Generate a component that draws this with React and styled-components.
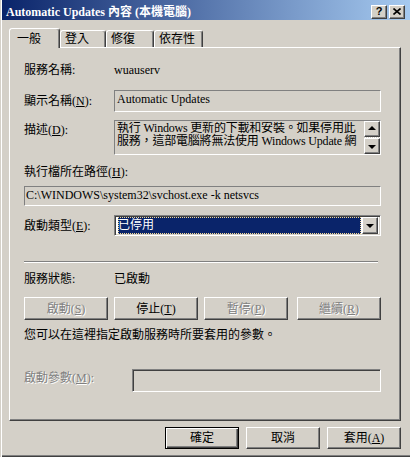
import React from "react";
import styled, { createGlobalStyle } from "styled-components";

const GlobalStyle = createGlobalStyle`
  html, body {
    margin: 0;
    padding: 0;
    background: #d4d0c8;
  }
  body {
    font-family: "Liberation Serif", "Noto Sans CJK TC", serif;
    font-size: 12px;
    color: #000;
  }
`;

const Window = styled.div`
  width: 410px;
  height: 457px;
  box-sizing: border-box;
  background: #d4d0c8;
  padding: 0 0 2px 2px;
  box-shadow: inset 1px 0 #d4d0c8, inset 2px 0 #fff, inset 0 -1px #404040,
    inset 0 -2px #808080;
  display: flex;
  flex-direction: column;
`;

const TitleBar = styled.div`
  height: 20px;
  box-sizing: border-box;
  padding: 3px 5px 0 4px;
  background: linear-gradient(to right, #0a246a, #a6caf0);
  display: flex;
  align-items: center;
`;

const Title = styled.div`
  flex: 1;
  color: #fff;
  font-weight: bold;
  font-size: 12px;
  line-height: 14px;
  white-space: nowrap;
`;

const Raised = styled.div`
  box-sizing: border-box;
  background: #d4d0c8;
  border: 1px solid;
  border-color: #fff #404040 #404040 #fff;
  box-shadow: inset -1px -1px #808080;
`;

const CaptionButton = styled(Raised)`
  width: 16px;
  height: 14px;
  margin-left: ${(p) => p.$gap || 0}px;
  display: flex;
  align-items: center;
  justify-content: center;
  font-family: "Liberation Sans", sans-serif;
  font-weight: bold;
  font-size: 11px;
  line-height: 12px;
  padding-bottom: 1px;
`;

const Body = styled.div`
  padding: 8px 9px 0 7px;
  display: flex;
  flex-direction: column;
`;

const TabStrip = styled.div`
  display: flex;
  align-items: flex-end;
  height: 20px;
  margin-bottom: -1px;
  position: relative;
  z-index: 1;
`;

const Tab = styled.div`
  box-sizing: border-box;
  width: ${(p) => p.$w}px;
  height: ${(p) => (p.$active ? 20 : 17)}px;
  margin-bottom: ${(p) => (p.$active ? 0 : 1)}px;
  padding-left: ${(p) => (p.$active ? 7 : 4)}px;
  background: #d4d0c8;
  border: 1px solid;
  border-bottom: none;
  border-color: #fff #404040 transparent #fff;
  box-shadow: inset -1px 0 #808080;
  border-radius: 3px 3px 0 0;
  display: flex;
  align-items: center;
  font-size: 12px;
  line-height: 14px;
  white-space: nowrap;
`;

const Panel = styled.div`
  box-sizing: border-box;
  height: 374px;
  border: 1px solid;
  border-color: #fff #404040 #404040 #fff;
  box-shadow: inset -1px -1px #808080;
  padding: 15px 19px 0 14px;
  display: flex;
  flex-direction: column;
`;

const Row = styled.div`
  display: flex;
  align-items: ${(p) => p.$align || "center"};
  margin-top: ${(p) => p.$mt || 0}px;
`;

const Label = styled.div`
  width: ${(p) => p.$w || 90}px;
  flex-shrink: 0;
  line-height: 14px;
  white-space: nowrap;
  padding-top: ${(p) => p.$pt || 0}px;
  color: ${(p) => (p.$disabled ? "#808080" : "#000")};
  text-shadow: ${(p) => (p.$disabled ? "1px 1px #fff" : "none")};
`;

const Text = styled.div`
  line-height: 14px;
  white-space: nowrap;
  margin-top: ${(p) => p.$mt || 0}px;
`;

const Field = styled.div`
  box-sizing: border-box;
  width: ${(p) => p.$w || 267}px;
  height: ${(p) => p.$h}px;
  margin-top: ${(p) => p.$mt || 0}px;
  border: 1px solid;
  border-color: #808080 #fff #fff #808080;
  box-shadow: ${(p) =>
    p.$deep ? "inset 1px 1px #404040, inset -1px -1px #d4d0c8" : "none"};
  padding: ${(p) => p.$pad || "1px 2px 0"};
  line-height: 14px;
  white-space: nowrap;
  overflow: hidden;
  display: flex;
`;

const DescText = styled.div`
  flex: 1;
  min-width: 0;
  overflow: hidden;
  line-height: 13px;
  letter-spacing: -0.2px;
  padding-right: 4px;
`;

const ScrollBar = styled.div`
  width: 16px;
  flex-shrink: 0;
  display: flex;
  flex-direction: column;
  margin: -1px -2px 0 0;
`;

const ScrollButton = styled(Raised)`
  width: 16px;
  height: 16px;
  display: flex;
  align-items: center;
  justify-content: center;
`;

const Track = styled.div`
  height: 2px;
  background: repeating-conic-gradient(#fff 0 25%, #d4d0c8 0 50%) 0 0 / 2px 2px;
`;

const Arrow = styled.span`
  width: 0;
  height: 0;
  border-left: 4px solid transparent;
  border-right: 4px solid transparent;
  ${(p) =>
    p.$up
      ? "border-bottom: 4px solid #000; margin-bottom: 1px;"
      : "border-top: 4px solid #000; margin-top: 1px;"}
`;

const Combo = styled.div`
  box-sizing: border-box;
  width: 267px;
  height: 21px;
  border: 1px solid;
  border-color: #808080 #fff #fff #808080;
  box-shadow: inset 1px 1px #404040, inset -1px -1px #d4d0c8;
  background: #fff;
  padding: 1px 2px 1px 2px;
  display: flex;
  align-items: stretch;
`;

const Selected = styled.div`
  flex: 1;
  margin: 0 1px 0 1px;
  background: #0a246a;
  color: #fff;
  outline: 1px dotted #f5db95;
  outline-offset: -1px;
  line-height: 16px;
  font-size: 12px;
`;

const DropButton = styled(Raised)`
  width: 16px;
  display: flex;
  align-items: center;
  justify-content: center;
`;

const Separator = styled.div`
  width: 354px;
  height: 0;
  margin-top: ${(p) => p.$mt}px;
  border-top: 1px solid #808080;
  border-bottom: 1px solid #fff;
`;

const ButtonRow = styled.div`
  display: flex;
  gap: 6px;
  margin-top: ${(p) => p.$mt || 0}px;
`;

const Button = styled(Raised)`
  width: ${(p) => p.$w}px;
  height: ${(p) => p.$h || 23}px;
  margin-left: ${(p) => (p.$push ? "auto" : "0")};
  display: flex;
  align-items: center;
  justify-content: center;
  font-size: 12px;
  line-height: 14px;
  white-space: nowrap;
  color: ${(p) => (p.$disabled ? "#808080" : "#000")};
  text-shadow: ${(p) => (p.$disabled ? "1px 1px #fff" : "none")};
  ${(p) =>
    p.$default &&
    `border-color: #000;
     box-shadow: inset 1px 1px #fff, inset -1px -1px #404040, inset -2px -2px #808080;`}
`;

const Footer = styled.div`
  display: flex;
  justify-content: flex-end;
  gap: 7px;
  margin-top: 6px;
`;

const CloseIcon = () => (
  <svg width="8" height="7" viewBox="0 0 8 7">
    <path d="M0.5 0.5 L7.5 6.5 M7.5 0.5 L0.5 6.5" stroke="#000" strokeWidth="1.6" />
  </svg>
);

export default function App() {
  return (
    <>
      <GlobalStyle />
      <Window>
        <TitleBar>
          <Title>Automatic Updates 內容 (本機電腦)</Title>
          <CaptionButton>?</CaptionButton>
          <CaptionButton $gap={2}>
            <CloseIcon />
          </CaptionButton>
        </TitleBar>
        <Body>
          <TabStrip>
            <Tab $active $w={51}>一般</Tab>
            <Tab $w={46}>登入</Tab>
            <Tab $w={48}>修復</Tab>
            <Tab $w={49}>依存性</Tab>
          </TabStrip>
          <Panel>
            <Row>
              <Label>服務名稱:</Label>
              <Text>wuauserv</Text>
            </Row>
            <Row $mt={13}>
              <Label>
                顯示名稱(<u>N</u>):
              </Label>
              <Field $h={22}>Automatic Updates</Field>
            </Row>
            <Row $mt={8} $align="flex-start">
              <Label $pt={3}>
                描述(<u>D</u>):
              </Label>
              <Field $h={35} $pad="1px 2px 0">
                <DescText>
                  <div>執行 Windows 更新的下載和安裝。如果停用此</div>
                  <div>服務，這部電腦將無法使用 Windows Update 網</div>
                </DescText>
                <ScrollBar>
                  <ScrollButton>
                    <Arrow $up />
                  </ScrollButton>
                  <Track />
                  <ScrollButton>
                    <Arrow />
                  </ScrollButton>
                </ScrollBar>
              </Field>
            </Row>
            <Text $mt={10}>
              執行檔所在路徑(<u>H</u>):
            </Text>
            <Field $h={20} $w={357} $mt={7} $pad="1px 2px 0 1px">
              C:\WINDOWS\system32\svchost.exe -k netsvcs
            </Field>
            <Row $mt={9}>
              <Label>
                啟動類型(<u>E</u>):
              </Label>
              <Combo>
                <Selected>已停用</Selected>
                <DropButton>
                  <Arrow />
                </DropButton>
              </Combo>
            </Row>
            <Separator $mt={25} />
            <Row $mt={9}>
              <Label>服務狀態:</Label>
              <Text>已啟動</Text>
            </Row>
            <ButtonRow $mt={11}>
              <Button $w={84} $disabled>
                啟動(<u>S</u>)
              </Button>
              <Button $w={84}>
                停止(<u>T</u>)
              </Button>
              <Button $w={84} $disabled>
                暫停(<u>P</u>)
              </Button>
              <Button $w={84} $push $disabled>
                繼續(<u>R</u>)
              </Button>
            </ButtonRow>
            <Text $mt={8}>您可以在這裡指定啟動服務時所要套用的參數。</Text>
            <Row $mt={27} $align="flex-start">
              <Label $w={108} $pt={2} $disabled>
                啟動參數(<u>M</u>):
              </Label>
              <Field $h={23} $w={249} $deep />
            </Row>
          </Panel>
          <Footer>
            <Button $w={74} $h={22} $default>
              確定
            </Button>
            <Button $w={74} $h={22}>
              取消
            </Button>
            <Button $w={74} $h={22}>
              套用(<u>A</u>)
            </Button>
          </Footer>
        </Body>
      </Window>
    </>
  );
}
